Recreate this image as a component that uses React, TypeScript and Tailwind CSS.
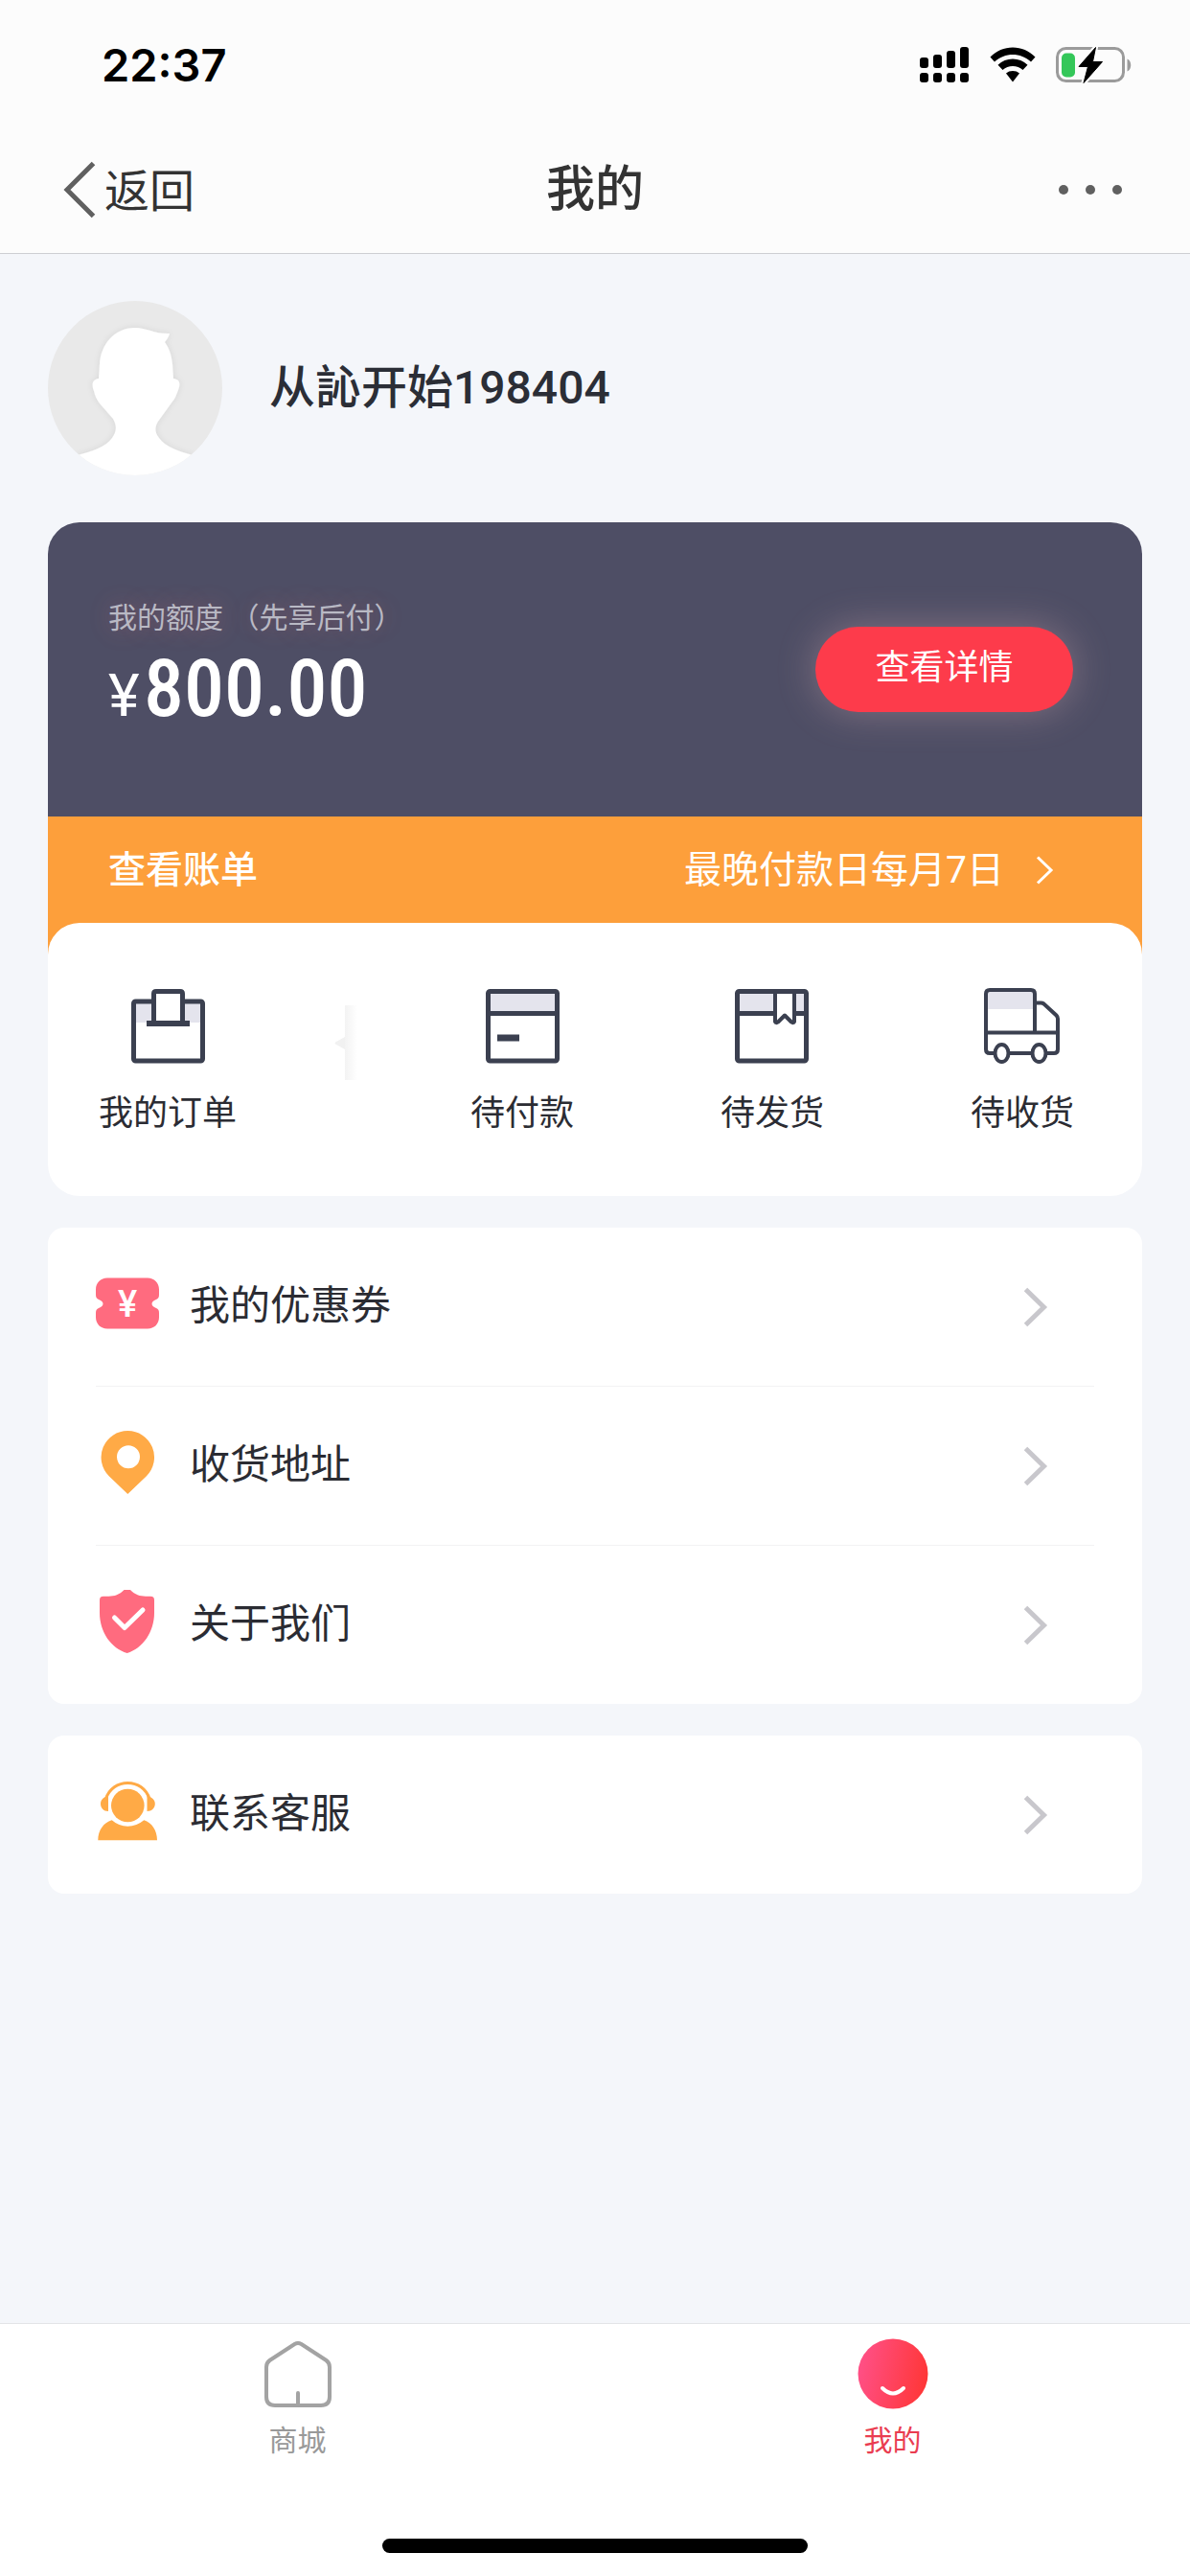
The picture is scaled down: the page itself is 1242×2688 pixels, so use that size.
import type { ReactNode } from 'react';

const INK = '#3b4050';
const TINT = '#e4e4ed';

function StatusBar() {
  return (
    <div className="flex h-[132px] items-center justify-between pl-[106px] pr-[60px] pt-[4px]">
      <span className="font-['Inter',sans-serif] text-[47px] font-semibold leading-[48px] text-black">22:37</span>
      <div className="flex items-center gap-[21px]">
        {/* 双卡信号 */}
        <svg width="52" height="38" viewBox="0 0 52 38" aria-hidden="true">
          {[11, 8, 4, 0].map((top, i) => (
            <g key={top}>
              <rect x={i * 14} y={top} width="9" height={22 - top} rx="3" />
              <rect x={i * 14} y="27" width="9" height="10" rx="3" />
            </g>
          ))}
        </svg>
        <svg width="48" height="38" viewBox="0 0 48 38" aria-hidden="true">
          <path d="M24 0.5C15 0.5 7 4 0.5 10.5L5 15.5C10.5 10.5 17 8 24 8s13.500 2.500 19 7.500l4.500-5C41 4 33 0.500 24 0.500z" />
          <path d="M24 12.500c-6 0-11 2.200-15.500 6.200l5 5.300C16.500 21.400 20 20 24 20s7.500 1.400 10.500 4l5-5.300C35 14.700 30 12.500 24 12.500z" />
          <path d="M24 25c-2.800 0-5 .8-7 2.500l7 9 7-9C29 25.800 26.800 25 24 25z" />
        </svg>
        <svg width="80" height="40" viewBox="0 0 80 40" aria-hidden="true">
          <rect x="1.500" y="2.500" width="69" height="34" rx="9" fill="none" stroke="#9b9b9b" strokeWidth="3" />
          <path d="M74.500 13.500c5 2 5 11 0 13z" fill="#9b9b9b" />
          <rect x="6" y="7.500" width="14" height="25" rx="5" fill="#34c759" />
          <path
            d="M41.500 1.500L24 21.500h9.500L29 38.500L48.500 16.500H38.500L41.500 1.500z"
            stroke="#fcfcfc"
            strokeWidth="5"
            strokeLinejoin="round"
          />
          <path d="M41.500 1.500L24 21.500h9.500L29 38.500L48.500 16.500H38.500L41.500 1.500z" stroke="#000" strokeLinejoin="round" />
        </svg>
      </div>
    </div>
  );
}

function NavBar() {
  return (
    <div className="grid h-[132px] grid-cols-3 items-center px-[66px]">
      <button type="button" className="flex items-center gap-[9px] justify-self-start text-[47px] leading-[60px] text-[#333]">
        <svg width="34" height="60" viewBox="0 0 34 60" fill="none" stroke="#606060" strokeWidth="5" aria-hidden="true">
          <path d="M31.500 2.500L4 30l27.500 27.500" />
        </svg>
        <span className="pt-[4px]">返回</span>
      </button>
      <h1 className="text-center text-[51px] font-medium leading-[60px] text-[#333]">我的</h1>
      <button type="button" aria-label="更多" className="flex gap-[18px] justify-self-end pr-[5px]">
        <span className="size-[10px] rounded-full bg-[#606060]" />
        <span className="size-[10px] rounded-full bg-[#606060]" />
        <span className="size-[10px] rounded-full bg-[#606060]" />
      </button>
    </div>
  );
}

function Avatar() {
  return (
    <svg className="size-[182px] shrink-0 rounded-full" viewBox="0 0 182 182" aria-label="头像">
      <defs>
        <filter id="soft" x="-20%" y="-20%" width="140%" height="140%">
          <feDropShadow dx="0" dy="0" stdDeviation="3" floodColor="#000" floodOpacity="0.09" />
        </filter>
      </defs>
      <rect width="182" height="182" fill="#e9e9e9" />
      <path
        filter="url(#soft)"
        fill="#fff"
        d="M91 28c12 0 22 7 36 6c-1 4-3 6-5 9c5 7 7 14 8 23l1 15c6 1 8 4 5 12c-2 5-3 9-6 12l-13 18c-6 7-6 14-1 20c7 10 22 14 35 18v32H31v-32c14-4 29-8 36-18c5-7 5-13 1-20L54 107c-3-4-5-8-6-13c-3-8-1-12 5-13l1-15c1-20 15-38 37-38z"
      />
    </svg>
  );
}

function OrderIcon() {
  return (
    <svg width="77" height="78" viewBox="0 0 77 78" fill="none" stroke={INK} strokeWidth="5" aria-hidden="true">
      <path d="M4 15h69v20H4z" fill={TINT} stroke="none" />
      <rect x="2.500" y="13" width="72" height="62" rx="2" />
      <path d="M23.500 35V5q0-2.500 2.500-2.500h25q2.500 0 2.500 2.500v30" fill="#fff" />
      <path d="M16 36h45" strokeWidth="6" />
    </svg>
  );
}

function PayIcon() {
  return (
    <svg width="77" height="78" viewBox="0 0 77 78" fill="none" stroke={INK} strokeWidth="5" aria-hidden="true">
      <path d="M4 4h69v20H4z" fill={TINT} stroke="none" />
      <rect x="2.500" y="2.500" width="72" height="72.500" rx="2" />
      <path d="M3 25.500h71" />
      <path d="M12 51h23" strokeWidth="7" />
    </svg>
  );
}

function ShipIcon() {
  return (
    <svg width="77" height="78" viewBox="0 0 77 78" fill="none" stroke={INK} strokeWidth="5" aria-hidden="true">
      <path d="M4 4h69v20H4z" fill={TINT} stroke="none" />
      <path d="M3 25.500h71" />
      <path d="M42 2v32q1 2 3 .5l7-7l7 7q2 1.500 3-.5V2" fill="#fff" strokeWidth="4" strokeLinejoin="round" />
      <rect x="2.500" y="2.500" width="72" height="72.500" rx="2" />
    </svg>
  );
}

function TruckIcon() {
  return (
    <svg width="79" height="80" viewBox="0 0 79 80" fill="none" stroke={INK} strokeWidth="4" aria-hidden="true">
      <path d="M3 3h49v19H3z" fill={TINT} stroke="none" />
      <path d="M53 46V6q0-4-4-4H6Q2 2 2 6v58q0 4 4 4h67q4 0 4-4V32q0-2-1.500-3.500l-13-12Q61 15.500 59.500 15.500H53" />
      <path d="M2 46.500h75" />
      <ellipse cx="18.500" cy="68" rx="7" ry="9" fill="#fff" />
      <ellipse cx="57.500" cy="68" rx="7" ry="9" fill="#fff" />
    </svg>
  );
}

function CouponIcon() {
  return (
    <svg width="66" height="54" viewBox="0 0 66 54" aria-hidden="true">
      <path
        fill="#ff6b7f"
        d="M12 .5h42c7 0 12 5 12 12V18c0 3-1 4-3 5c-6 2-6 7 0 9c2 .7 3 2 3 5v4.500c0 7-5 12-12 12H12c-7 0-12-5-12-12V37c0-3 1-4.300 3-5c6-2 6-7 0-9c-2-1-3-2-3-5v-5.500C0 5.500 5 .5 12 .5z"
      />
      <text x="33" y="41" textAnchor="middle" fill="#fff" className="font-['Roboto',sans-serif] text-[38px] font-medium">¥</text>
    </svg>
  );
}

function PinIcon() {
  return (
    <svg width="66" height="66" viewBox="0 0 66 66" aria-hidden="true">
      <path
        fill="#ffaa46"
        fillRule="evenodd"
        d="M33.300 0a27.700 27.700 0 0 1 19.600 47.300L33.300 66L13.700 47.300A27.700 27.700 0 0 1 33.300 0zM34 15.300a12 12 0 1 0 0 24a12 12 0 1 0 0-24z"
      />
    </svg>
  );
}

function ShieldIcon() {
  return (
    <svg width="66" height="66" viewBox="0 0 66 66" aria-hidden="true">
      <path
        fill="#ff6b7f"
        d="M29.500 0h6.500c5 5 10 6.700 16 6.700h5c3 0 4 1.500 4 4V24c0 20-12 37-28.300 42C16 61 4 44 4 24V10.700c0-2.500 1-4 4-4h5.500c6 0 11-1.700 16-6.700z"
      />
      <path d="M19.500 29L30 39.500L49 21" fill="none" stroke="#fff" strokeWidth="5" strokeLinecap="round" strokeLinejoin="round" />
    </svg>
  );
}

function ServiceIcon() {
  return (
    <svg width="66" height="66" viewBox="0 0 66 66" fill="#ffaa46" aria-hidden="true">
      <circle cx="33.300" cy="27" r="17.300" />
      <path d="M10.500 20C14 9.500 23 3.500 33.300 3.500S52.600 9.500 56 20" fill="none" stroke="#ffaa46" strokeWidth="3" />
      <path d="M13 16.500V33c-5 0-8-3.500-8-8c0-3 1.500-5 4-6.500zM53.500 16.500V33c5 0 8.300-3.500 8.300-8c0-3-1.800-5-4.300-6.500z" />
      <path d="M2.300 63.300C2.300 53 8 45 16.700 42.300Q24 48.700 33.300 48.700T50.300 42.300C58.500 45 64 53 64 63.300z" />
    </svg>
  );
}

function ChevronRight() {
  return (
    <svg width="26" height="42" viewBox="0 0 26 42" fill="none" stroke="#c8c7cc" strokeWidth="5" aria-hidden="true">
      <path d="M2.500 2.500L21.500 21L2.500 39.500" />
    </svg>
  );
}

function CreditCard() {
  return (
    <section className="rounded-t-[33px] bg-[#4e4e65] text-white">
      <div className="flex h-[307px] items-center justify-between pl-[63px] pr-[72px]">
        <div className="pt-[4px]">
          <p className="whitespace-pre text-[30px] leading-[40px] text-[#b9b9c4] [text-shadow:0_0_24px_rgba(255,120,120,0.3)]">我的额度 （先享后付）</p>
          <p className="mt-[4px] flex items-baseline">
            <span className="w-[37px] font-['Roboto',sans-serif] text-[62px] leading-[100px]">¥</span>
            <span className="font-['Roboto_Condensed','Roboto',sans-serif] text-[84px] font-medium leading-[100px]">800.00</span>
          </p>
        </div>
        <button
          type="button"
          className="h-[89px] w-[269px] rounded-full bg-[#fd3b4b] pb-[4px] text-[36px] shadow-[0_0_40px_rgba(255,200,200,0.3)]"
        >
          查看详情
        </button>
      </div>
      <a href="#bill" className="flex h-[144px] items-start justify-between bg-[#fd9f3b] pl-[63px] pr-[91px] pt-[26px] leading-[60px]">
        <span className="text-[39px] font-medium">查看账单</span>
        <span className="flex items-center gap-[33px] text-[39px]">
          最晚付款日每月7日
          <svg width="20" height="30" viewBox="0 0 20 30" fill="none" stroke="#fff" strokeWidth="3" aria-hidden="true">
            <path d="M2 1.500L16 15L2 28.500" />
          </svg>
        </span>
      </a>
    </section>
  );
}

function OrderEntry({ icon, label }: { icon: ReactNode; label: string }) {
  return (
    <a href="#orders" className="flex flex-col items-center gap-[25px] text-[36px] leading-[54px] text-[#2b2c33]">
      <span className="flex h-[78px] items-center">{icon}</span>
      {label}
    </a>
  );
}

function Orders() {
  return (
    <section className="-mt-[33px] flex h-[285px] items-start rounded-[33px] bg-white pl-[53px] pr-[71px] pt-[69px]">
      <div className="flex w-[270px] justify-between">
        <OrderEntry icon={<OrderIcon />} label="我的订单" />
        <svg className="mt-[17px]" width="24" height="78" viewBox="0 0 24 78" aria-hidden="true">
          <defs>
            <linearGradient id="fade">
              <stop offset="0" stopColor="#f3f3f3" />
              <stop offset="1" stopColor="#fff" />
            </linearGradient>
          </defs>
          <rect x="11" width="13" height="78" fill="url(#fade)" />
          <path d="M11 33v13L1 40.500q-1-1 0-2z" fill="#f1f1f1" />
        </svg>
      </div>
      <div className="ml-[118px] flex flex-1 justify-between">
        <OrderEntry icon={<PayIcon />} label="待付款" />
        <OrderEntry icon={<ShipIcon />} label="待发货" />
        <OrderEntry icon={<TruckIcon />} label="待收货" />
      </div>
    </section>
  );
}

function MenuRow({ icon, label }: { icon: ReactNode; label: string }) {
  return (
    <li>
      <a href="#menu" className="flex h-[165px] items-center pr-[48px] text-[42px] leading-[60px] text-[#2b2c33]">
        <span className="flex h-[74px] w-[66px] items-start">
          <span className="flex h-[66px] items-center">{icon}</span>
        </span>
        <span className="ml-[32px] flex-1 pb-[2px]">{label}</span>
        <ChevronRight />
      </a>
    </li>
  );
}

function TabItem({ icon, label, active }: { icon: ReactNode; label: string; active?: boolean }) {
  return (
    <a
      href="#tab"
      className={`flex flex-1 flex-col items-center gap-[13px] pt-[15px] text-[30px] leading-[40px] ${active ? 'text-[#ea3d51]' : 'text-[#999]'}`}
    >
      {icon}
      {label}
    </a>
  );
}

export default function App() {
  return (
    <div className="flex min-h-screen flex-col bg-[#f4f6fa] font-['Roboto','Noto_Sans_CJK_SC',sans-serif]">
      <header className="border-b border-[#cdced2] bg-[#fcfcfc]">
        <StatusBar />
        <NavBar />
      </header>

      <main className="flex-1 px-[50px]">
        <div className="flex items-center gap-[49px] py-[49px]">
          <Avatar />
          <h2 className="text-[48px] font-medium leading-[60px] text-[#2b2e36]">从訫开始198404</h2>
        </div>

        <CreditCard />
        <Orders />

        <ul className="mt-[33px] divide-y divide-[#f3f3f4] rounded-[17px] bg-white px-[50px]">
          <MenuRow icon={<CouponIcon />} label="我的优惠券" />
          <MenuRow icon={<PinIcon />} label="收货地址" />
          <MenuRow icon={<ShieldIcon />} label="关于我们" />
        </ul>
        <ul className="mt-[33px] rounded-[17px] bg-white px-[50px]">
          <MenuRow icon={<ServiceIcon />} label="联系客服" />
        </ul>
      </main>

      <footer className="border-t border-[#e3e4e7] bg-white">
        <nav className="flex">
          <TabItem
            label="商城"
            icon={
              <svg width="74" height="74" viewBox="-2 -3 74 74" fill="none" stroke="#a3a3a3" strokeWidth="4" aria-hidden="true">
                <path d="M31.500 3q3.500-2 7 0l26 17Q68 22.500 68 27v31q0 9-9 9H11q-9 0-9-9V27q0-4.500 3.500-7z" />
                <path d="M35 67V54" strokeLinecap="round" />
              </svg>
            }
          />
          <TabItem
            active
            label="我的"
            icon={
              <svg width="74" height="74" viewBox="0 0 74 74" aria-hidden="true">
                <defs>
                  <linearGradient id="face" x1="0" y1="0.4" x2="1" y2="0.6">
                    <stop offset="0" stopColor="#ff5087" />
                    <stop offset="1" stopColor="#ff3636" />
                  </linearGradient>
                </defs>
                <circle cx="37" cy="37" r="36.500" fill="url(#face)" />
                <path d="M26 52q11 11 22 0" fill="none" stroke="#fff" strokeWidth="4" strokeLinecap="round" />
              </svg>
            }
          />
        </nav>
        <div className="mx-auto mb-[24px] mt-[82px] h-[15px] w-[444px] rounded-full bg-black" />
      </footer>
    </div>
  );
}
